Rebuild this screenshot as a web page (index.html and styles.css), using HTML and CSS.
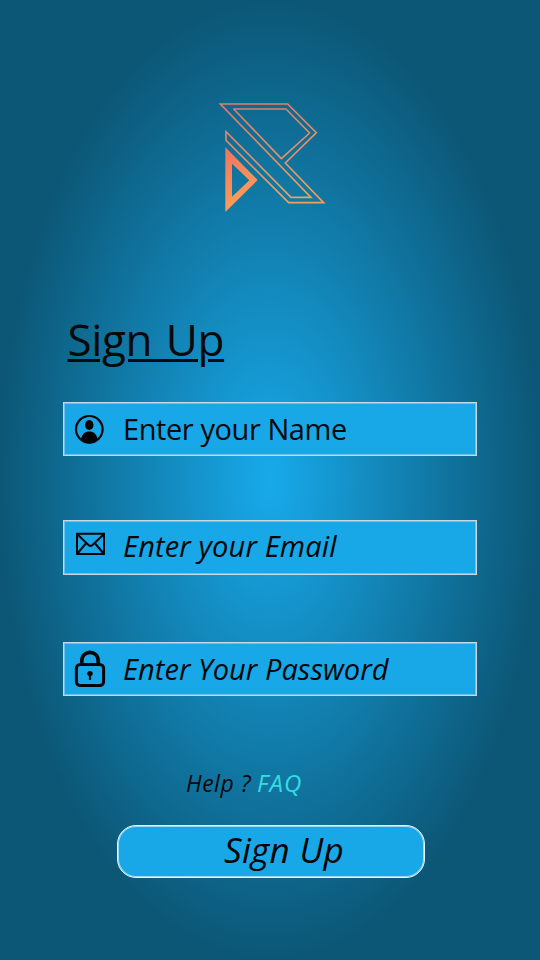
FILE: index.html
```html
<!DOCTYPE html>
<html lang="en">
<head>
<meta charset="utf-8">
<title>Sign Up</title>
<link rel="stylesheet" href="styles.css">
</head>
<body>
<main class="screen">
  <svg class="logo" viewBox="0 0 375 375" fill="none" aria-hidden="true">
    <defs>
      <linearGradient id="line" gradientUnits="userSpaceOnUse" x1="120" y1="27" x2="210" y2="323">
        <stop offset="0" stop-color="#df7d6c"/><stop offset="1" stop-color="#eda160"/>
      </linearGradient>
      <linearGradient id="solid" x1="0" y1="0" x2="0.3" y2="1">
        <stop offset="0.15" stop-color="#f4785f"/><stop offset="0.85" stop-color="#fa9a58"/>
      </linearGradient>
    </defs>
    <path stroke="url(#line)" stroke-width="4.8" d="M31 27H233L319 113L226 204L341 323H236L48 136V110L243 307H303Z"/>
    <path stroke="url(#line)" stroke-width="4.8" stroke-linejoin="round" d="M71 42H228L299 114L214 191Z"/>
    <path fill="url(#solid)" fill-rule="evenodd" d="M46 157L143 255L46 351ZM66 206V305L118 256Z"/>
  </svg>
  <h1 class="title">Sign Up</h1>
  <form class="form">
    <div class="field">
      <svg class="icon" viewBox="0 0 32 32" aria-hidden="true">
        <circle cx="15.3" cy="16.3" r="13.3" fill="none" stroke="#020608" stroke-width="2.2"/>
        <ellipse cx="15.3" cy="12" rx="4.2" ry="4.9"/>
        <path d="M6.8 26.3C8.3 20.7 11 18.4 15.3 18.4S22.3 20.7 23.8 26.3C19.5 31.5 11.1 31.5 6.8 26.3Z"/>
      </svg>
      <span class="text name">Enter your Name</span>
    </div>
    <div class="field email-field">
      <svg class="icon envelope" viewBox="0 0 32 32" fill="none" stroke="#020608" stroke-width="2" aria-hidden="true">
        <path d="M3 6.8H30V27H3ZM3 7L14.5 18Q16.5 19.8 18.5 18L30 7M3 27L12.3 16M30 27L20.7 16"/>
      </svg>
      <span class="text email">Enter your Email</span>
    </div>
    <div class="field password-field">
      <svg class="icon lock" viewBox="0 0 32 38" fill="none" stroke="#020608" aria-hidden="true">
        <rect x="2.4" y="14.4" width="27.2" height="21.2" rx="3.8" stroke-width="3"/>
        <path d="M7.8 14V11C7.8 -.6 24.2 -.6 24.2 11V14" stroke-width="3.7"/>
        <circle cx="16" cy="23.6" r="2.7" fill="#020608" stroke="none"/>
        <path d="M16 24V30" stroke-width="2.2"/>
      </svg>
      <span class="text password">Enter Your Password</span>
    </div>
    <p class="help"><span class="question">Help ?</span><a class="faq">FAQ</a></p>
    <button class="submit" type="button"><span class="submit-text">Sign Up</span></button>
  </form>
</main>
</body>
</html>
```
FILE: styles.css
```css
* { box-sizing: border-box; }
body { margin: 0; }
.screen {
  width: 540px;
  height: 960px;
  padding: 95px 63px 0;
  overflow: hidden;
  background: radial-gradient(ellipse 50% 50% at center, #18aaeb 0%, #0c5776 100%);
  font-family: "Open Sans", "Noto Sans", sans-serif;
  color: #07090b;
}
.logo { display: block; width: 125px; height: 125px; margin-left: 147px; }
.title {
  width: max-content;
  margin: 89px 0 0 4.5px;
  font-size: 44px;
  line-height: 60px;
  font-weight: 380;
  letter-spacing: -0.35px;
  word-spacing: 2.5px;
  text-decoration: underline;
  text-decoration-thickness: 3px;
  text-underline-offset: 3px;
}
.form { display: flex; flex-direction: column; margin-top: 33px; }
.field {
  display: flex;
  align-items: center;
  height: 54px;
  padding-left: 10px;
  border: 1px solid #c9d9e3;
  background: #18a8e8;
  box-shadow: inset 0 0 0 1px #6dbfe6;
}
.email-field { height: 55px; margin-top: 64px; padding-bottom: 3px; }
.password-field { margin-top: 67px; }
.icon { width: 32px; height: 32px; margin-right: 17px; }
.envelope { margin-bottom: 7px; }
.lock { height: 38px; }
.text { font-size: 29px; line-height: 40px; white-space: nowrap; }
.name { letter-spacing: -0.42px; }
.email, .password { font-style: italic; color: #020608; }
.email { letter-spacing: 0.15px; }
.password { letter-spacing: 0.05px; }
.help {
  display: flex;
  gap: 6px;
  margin: 71px 0 0 123px;
  font-size: 23px;
  line-height: 32px;
  font-style: italic;
}
.question { letter-spacing: 0.5px; }
.faq { color: #35dce2; font-size: 24px; font-weight: 500; letter-spacing: 1px; }
.submit {
  width: 308px;
  height: 53px;
  margin: 26px 0 0 54px;
  padding: 0 0 3px 26px;
  border: 1px solid #eef6fb;
  border-radius: 19px;
  background: #18a8e8;
  box-shadow: inset 0 0 0 1px #9dd6f0;
  color: #020304;
  font: italic 35px/48px "Open Sans", "Noto Sans", sans-serif;
  letter-spacing: 0.3px;
}
```
